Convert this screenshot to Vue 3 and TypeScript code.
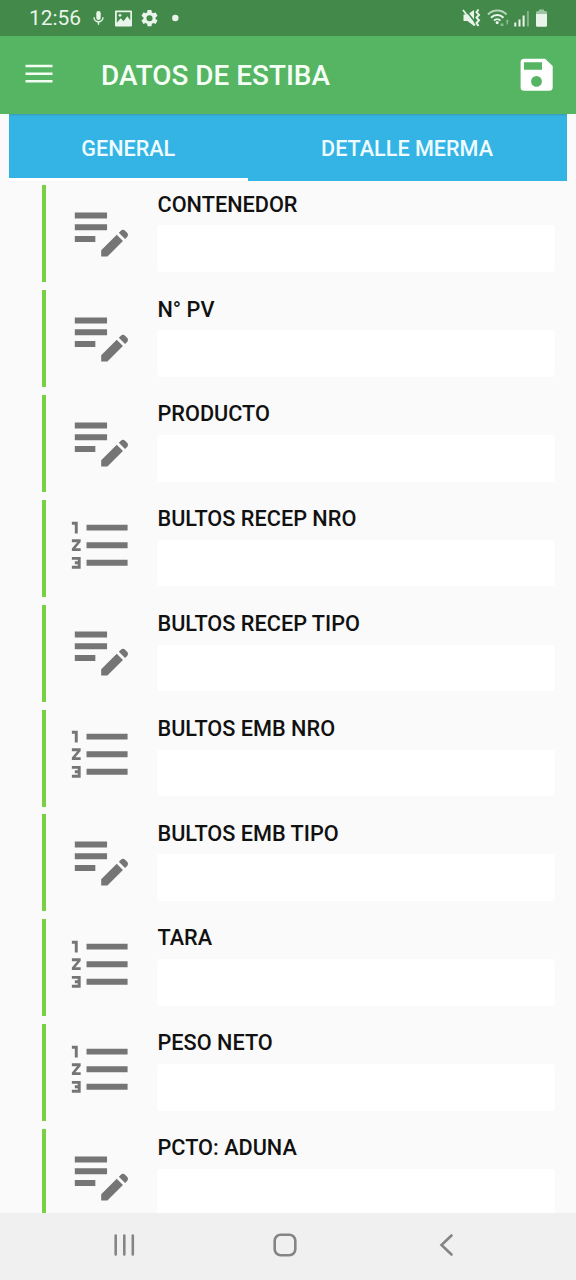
<script setup lang="ts">
interface Field {
  label: string
  kind: 'text' | 'number'
}

const fields: Field[] = [
  { label: 'CONTENEDOR', kind: 'text' },
  { label: 'N° PV', kind: 'text' },
  { label: 'PRODUCTO', kind: 'text' },
  { label: 'BULTOS RECEP NRO', kind: 'number' },
  { label: 'BULTOS RECEP TIPO', kind: 'text' },
  { label: 'BULTOS EMB NRO', kind: 'number' },
  { label: 'BULTOS EMB TIPO', kind: 'text' },
  { label: 'TARA', kind: 'number' },
  { label: 'PESO NETO', kind: 'number' },
  { label: 'PCTO: ADUNA', kind: 'text' },
]

const iconPaths: Record<Field['kind'], string> = {
  text: 'M3 10h11v2H3v-2zm0-2h11V6H3v2zm0 8h7v-2H3v2zm15.01-3.13.71-.71c.39-.39 1.02-.39 1.41 0l.71.71c.39.39.39 1.02 0 1.41l-.71.71-2.12-2.12zm-.71.71-5.3 5.3V21h2.12l5.3-5.3-2.12-2.12z',
  number:
    'M2 17h2v.5H3v1h1v.5H2v1h3v-4H2v1zm1-9h1V4H2v1h1v3zm-1 3h1.8L2 13.1v.9h3v-1H3.2L5 10.9V10H2v1zm5-6v2h14V5H7zm0 14h14v-2H7v2zm0-6h14v-2H7v2z',
}
</script>

<template>
  <div class="screen">
    <div class="status">
      <span class="clock">12:56</span>
      <svg class="notices" width="96" height="36" viewBox="0 0 96 36" fill="#e9f5ea">
        <rect x="7.3" y="11" width="4.4" height="9" rx="2.2" />
        <path d="M5 17.2a4.5 4.5 0 0 0 9 0M9.500 21.700v3" fill="none" stroke="#e9f5ea" stroke-width="1.4" />
        <path fill-rule="evenodd" d="M27 10.500h15a1 1 0 0 1 1 1v14a1 1 0 0 1-1 1H27a1 1 0 0 1-1-1v-14a1 1 0 0 1 1-1zM27.800 12.300v10.500l4-4.500 2.700 3 3.800-5 3 4v-8z" />
        <circle cx="31" cy="15.300" r="1.400" />
        <path
          transform="translate(50.300 8) scale(.85)"
          d="M19.140 12.940c.04-.3.060-.610.060-.940s-.02-.640-.07-.940l2.030-1.580a.49.49 0 0 0 .12-.61l-1.920-3.320a.49.49 0 0 0-.59-.22l-2.390.960c-.5-.38-1.030-.7-1.620-.94L14.400 2.810a.48.48 0 0 0-.48-.41h-3.840a.47.47 0 0 0-.47.41l-.36 2.540c-.59.240-1.130.57-1.620.94l-2.390-.96a.48.48 0 0 0-.59.22L2.740 8.870a.47.47 0 0 0 .12.61l2.030 1.580c-.05.3-.09.630-.09.94s.02.640.07.94l-2.030 1.580a.49.49 0 0 0-.12.61l1.920 3.320c.12.22.37.290.59.22l2.390-.96c.5.380 1.030.7 1.620.94l.36 2.540c.05.240.240.410.48.410h3.840c.24 0 .44-.17.47-.41l.36-2.540c.59-.24 1.130-.56 1.620-.94l2.390.96c.22.080.47 0 .59-.22l1.920-3.320a.47.47 0 0 0-.12-.61l-2.010-1.580zM12 15.600a3.600 3.600 0 1 1 0-7.200 3.600 3.600 0 0 1 0 7.200z"
        />
        <circle cx="86.300" cy="18" r="3.200" />
      </svg>
      <svg class="signals" width="88" height="36" viewBox="0 0 88 36" fill="#e9f5ea">
        <path d="M3.500 14.500h4L14 10v16l-6.500-5h-4z" />
        <path d="M4.800 9 15 22" stroke="#42894a" stroke-width="1.600" />
        <path d="M3 10 15 25.500" stroke="#e9f5ea" stroke-width="1.700" />
        <path d="m18.500 9.500-2 2.700 2.500 2.700-2.500 2.700 2.500 2.700-2.500 2.700 2 3" fill="none" stroke="#e9f5ea" stroke-width="2" />
        <g fill="none" stroke="#e9f5ea" stroke-width="2">
          <path d="M28 14.500a12.500 12.500 0 0 1 18.500 0" opacity=".7" />
          <path d="M31 17.700a8.500 8.500 0 0 1 12.500 0" />
          <path d="M34 20.600a4.600 4.600 0 0 1 6.500 0" />
        </g>
        <circle cx="37.200" cy="22.600" r="1.600" />
        <path d="M40.500 23.500h3v2.500h-3zM47.300 19.500l2 2H48v3h-1.400v-3h-1.300z" opacity=".45" />
        <rect x="54.300" y="22.500" width="2" height="4" />
        <rect x="58.500" y="19.500" width="2" height="7" />
        <rect x="62.600" y="15.500" width="2" height="11" />
        <rect x="66.900" y="11" width="2" height="15.500" opacity=".4" />
        <path d="M76 12.500q0-1.500 1.500-1.500H79V9.500h5V11h1.500q1.500 0 1.500 1.500v1.500H76z" opacity=".55" />
        <path d="M76 14h11v11.500q0 1.200-1.200 1.200h-8.600q-1.200 0-1.200-1.200z" />
      </svg>
    </div>

    <header class="appbar">
      <svg class="menu" width="28" height="20" viewBox="0 0 28 20">
        <path d="M.5 2h27M.5 9.700h27M.5 17.300h27" stroke="#f4fff4" stroke-width="2.500" />
      </svg>
      <h1 class="title">DATOS DE ESTIBA</h1>
      <svg class="save" width="34" height="34" viewBox="0 0 34 34">
        <path
          fill="#fff"
          fill-rule="evenodd"
          d="M4 .8h21L32.700 8v21.200a3.600 3.600 0 0 1-3.600 3.600H4.200a3.600 3.600 0 0 1-3.600-3.600V4.400A3.600 3.600 0 0 1 4 .8zM4 4.300v7.400h18V4.300zM16.500 18a5.400 5.400 0 1 0 0 10.800 5.400 5.400 0 0 0 0-10.800z"
        />
      </svg>
    </header>

    <nav class="tabs">
      <div class="tab active">GENERAL</div>
      <div class="tab">DETALLE MERMA</div>
    </nav>

    <main class="list">
      <section v-for="field in fields" :key="field.label" class="row">
        <svg class="kind" viewBox="0 0 24 24"><path :d="iconPaths[field.kind]" /></svg>
        <label class="field">
          <span class="label">{{ field.label }}</span>
          <input class="input" type="text" />
        </label>
      </section>
    </main>

    <footer class="navbar">
      <svg width="24" height="24" viewBox="0 0 24 24">
        <path d="M3.700 2.500v19M12.300 2.500v19M20.800 2.500v19" />
      </svg>
      <svg class="home" width="24" height="24" viewBox="0 0 24 24">
        <rect x="1.700" y="1.700" width="20.600" height="20.600" rx="6" />
      </svg>
      <svg width="24" height="24" viewBox="0 0 24 24">
        <path d="M16.500 2.500 6.500 12l10 9.500" />
      </svg>
    </footer>
  </div>
</template>

<style>
body {
  margin: 0;
}
</style>

<style scoped>
.screen {
  display: flex;
  flex-direction: column;
  width: 576px;
  height: 1280px;
  overflow: hidden;
  background: #fafafa;
  font-family: Roboto, "Liberation Sans", sans-serif;
}
.status {
  display: flex;
  align-items: center;
  flex: none;
  height: 36px;
  background: #42894a;
}
.clock {
  width: 60px;
  margin-left: 29px;
  color: #e9f5ea;
  font-size: 20.9px;
  line-height: 36px;
}
.signals {
  margin-left: 275px;
}
.appbar {
  display: flex;
  align-items: center;
  flex: none;
  height: 78px;
  background: #55b563;
}
.menu {
  margin: -2px 0 0 25px;
}
.title {
  width: 419px;
  margin: 2px 0 0 48px;
  color: #f6fff6;
  font-size: 27.9px;
  font-weight: 500;
  line-height: 32px;
  white-space: nowrap;
}
.save {
  flex: none;
}
.tabs {
  display: flex;
  flex: none;
  width: 557.5px;
  height: 67px;
  margin-left: 9px;
  background: #33b4e5;
  box-shadow: inset 0 2px 2px -1px #3c9bb0;
}
.tab {
  display: flex;
  justify-content: center;
  box-sizing: border-box;
  width: 319.5px;
  padding-top: 22px;
  color: #effcff;
  font-size: 21.6px;
  font-weight: 500;
  line-height: 26px;
  white-space: nowrap;
}
.tab.active {
  width: 239px;
  border-bottom: 3px solid #fff;
}
.list {
  flex: 1;
  min-height: 0;
  padding-top: 4.4px;
  overflow: hidden;
}
.row {
  display: flex;
  box-sizing: border-box;
  height: 97px;
  margin: 0 21px 7.83px 42px;
  border-left: 4px solid #78d043;
}
.kind {
  flex: none;
  width: 70.4px;
  height: 70.4px;
  margin: 9.7px 0 0 20.3px;
  fill: #757575;
}
.field {
  display: flex;
  flex: 1;
  flex-direction: column;
  margin-left: 20.8px;
}
.label {
  height: 26px;
  margin: 6.3px 0 7.8px;
  color: #111;
  font-size: 21.7px;
  font-weight: 500;
  line-height: 26px;
  white-space: nowrap;
}
.input {
  box-sizing: border-box;
  width: 397.5px;
  height: 46.5px;
  padding: 0 10px;
  border: 0;
  border-radius: 4px;
  background: #fff;
  font: inherit;
}
.navbar {
  display: flex;
  align-items: center;
  justify-content: space-between;
  flex: none;
  box-sizing: border-box;
  height: 67px;
  padding: 0 117px 3px 112px;
  background: #f0f0f0;
}
.navbar svg {
  fill: none;
  stroke: #858585;
  stroke-width: 2.6;
  stroke-linecap: round;
}
.navbar .home {
  margin-right: 1px;
}
</style>
